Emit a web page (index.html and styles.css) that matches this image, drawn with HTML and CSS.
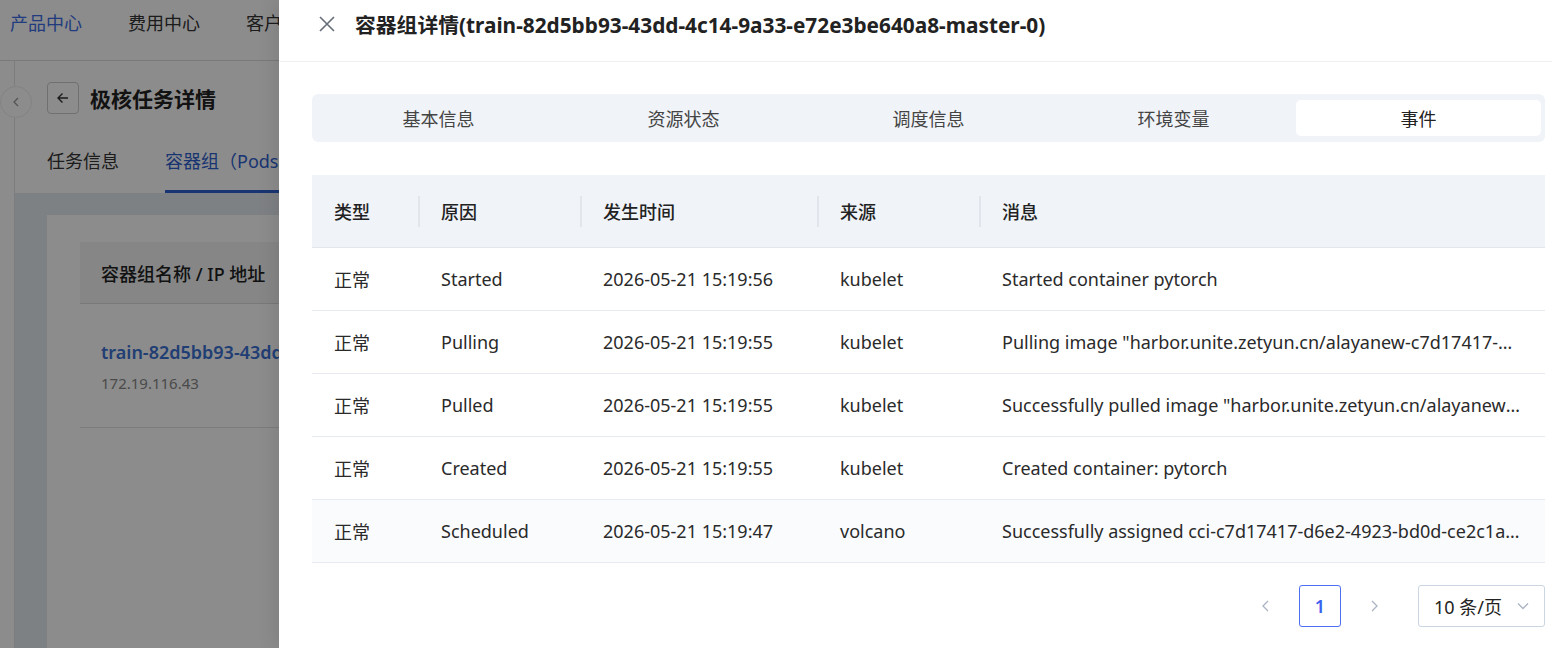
FILE: index.html
```html
<!DOCTYPE html>
<html lang="zh-CN">
<head>
  <meta charset="UTF-8">
  <meta name="viewport" content="width=device-width, initial-scale=1.0">
  <title>容器组详情</title>
  <link rel="stylesheet" href="styles.css">
</head>
<body>
  <!-- page behind the drawer -->
  <div class="page">
    <nav class="topnav">
      <a class="nav-item active">产品中心</a>
      <a class="nav-item">费用中心</a>
      <a class="nav-item">客户中心</a>
    </nav>
    <div class="main">
      <div class="side-strip"></div>
      <button class="collapse-btn">
        <svg width="12" height="12" viewBox="0 0 12 12"><path d="M8 2 L4 6 L8 10" fill="none" stroke="#999" stroke-width="1.3"/></svg>
      </button>
      <div class="content">
        <div class="page-head">
          <button class="back-btn">
            <svg width="16" height="16" viewBox="0 0 16 16"><path d="M13 8 H3 M7.5 3.5 L3 8 L7.5 12.5" fill="none" stroke="#333" stroke-width="1.4"/></svg>
          </button>
          <h1 class="page-title">极核任务详情</h1>
        </div>
        <div class="page-tabs">
          <span class="page-tab">任务信息</span>
          <span class="page-tab current">容器组（Pods）</span>
        </div>
        <div class="page-body">
          <div class="card">
            <div class="pod-table">
              <div class="pod-head">容器组名称 / IP 地址</div>
              <div class="pod-row">
                <a class="pod-name">train-82d5bb93-43dd-4c14-9a33-e72e3be640a8-master-0</a>
                <div class="pod-ip">172.19.116.43</div>
              </div>
            </div>
          </div>
        </div>
      </div>
    </div>
  </div>

  <div class="mask"></div>

  <aside class="drawer">
    <header class="drawer-head">
      <svg class="close-icon" width="18" height="18" viewBox="0 0 18 18"><path d="M2 2 L16 16 M16 2 L2 16" fill="none" stroke="#666e7a" stroke-width="1.6"/></svg>
      <h2 class="drawer-title">容器组详情(train-82d5bb93-43dd-4c14-9a33-e72e3be640a8-master-0)</h2>
    </header>

    <div class="drawer-body">
      <div class="seg-tabs">
        <div class="seg-tab">基本信息</div>
        <div class="seg-tab">资源状态</div>
        <div class="seg-tab">调度信息</div>
        <div class="seg-tab">环境变量</div>
        <div class="seg-tab active">事件</div>
      </div>

      <table class="events">
        <thead>
          <tr>
            <th class="c-type">类型</th>
            <th class="c-reason">原因</th>
            <th class="c-time">发生时间</th>
            <th class="c-from">来源</th>
            <th class="c-msg">消息</th>
          </tr>
        </thead>
        <tbody>
          <tr>
            <td>正常</td>
            <td>Started</td>
            <td>2026-05-21 15:19:56</td>
            <td>kubelet</td>
            <td><div class="ellipsis">Started container pytorch</div></td>
          </tr>
          <tr>
            <td>正常</td>
            <td>Pulling</td>
            <td>2026-05-21 15:19:55</td>
            <td>kubelet</td>
            <td><div class="ellipsis">Pulling image "harbor.unite.zetyun.cn/alayanew-c7d17417-d6e2-4923-bd0d-ce2c1a/pytorch:latest"</div></td>
          </tr>
          <tr>
            <td>正常</td>
            <td>Pulled</td>
            <td>2026-05-21 15:19:55</td>
            <td>kubelet</td>
            <td><div class="ellipsis">Successfully pulled image "harbor.unite.zetyun.cn/alayanew-c7d17417-d6e2-4923-bd0d-ce2c1a/pytorch:latest"</div></td>
          </tr>
          <tr>
            <td>正常</td>
            <td>Created</td>
            <td>2026-05-21 15:19:55</td>
            <td>kubelet</td>
            <td><div class="ellipsis">Created container: pytorch</div></td>
          </tr>
          <tr class="hover">
            <td>正常</td>
            <td>Scheduled</td>
            <td>2026-05-21 15:19:47</td>
            <td>volcano</td>
            <td><div class="ellipsis">Successfully assigned cci-c7d17417-d6e2-4923-bd0d-ce2c1a/train-82d5bb93-43dd-4c14-9a33-e72e3be640a8-master-0</div></td>
          </tr>
        </tbody>
      </table>

      <div class="pager">
        <span class="pager-arrow prev">
          <svg width="14" height="14" viewBox="0 0 14 14"><path d="M9 2 L4 7 L9 12" fill="none" stroke="#aab4c2" stroke-width="1.3"/></svg>
        </span>
        <span class="pager-num">1</span>
        <span class="pager-arrow next">
          <svg width="14" height="14" viewBox="0 0 14 14"><path d="M5 2 L10 7 L5 12" fill="none" stroke="#aab4c2" stroke-width="1.3"/></svg>
        </span>
        <div class="page-size">
          <span>10 条/页</span>
          <svg width="14" height="14" viewBox="0 0 14 14"><path d="M2 4.5 L7 9.5 L12 4.5" fill="none" stroke="#aab4c2" stroke-width="1.3"/></svg>
        </div>
      </div>
    </div>
  </aside>
</body>
</html>
```

FILE: styles.css
```css
* {
  box-sizing: border-box;
}

body {
  margin: 0;
  width: 1552px;
  height: 648px;
  overflow: hidden;
  font-family: "Noto Sans", "Noto Sans CJK SC", sans-serif;
  font-size: 18px;
  color: #222;
  background: #fff;
  position: relative;
}

button {
  font: inherit;
  background: #fff;
  padding: 0;
  cursor: pointer;
}

/* ---- page underneath ---- */

.page {
  height: 100%;
  display: flex;
  flex-direction: column;
}

.topnav {
  height: 61px;
  flex-shrink: 0;
  display: flex;
  align-items: center;
  gap: 46px;
  padding: 0 0 16px 10px;
  border-bottom: 1px solid #dcdcdc;
  white-space: nowrap;
}

.nav-item {
  font-size: 18px;
  color: #333;
}

.nav-item.active {
  color: #3b6ee8;
}

.main {
  flex: 1;
  display: flex;
  position: relative;
}

.side-strip {
  width: 15px;
  border-right: 1px solid #e4e4e4;
  flex-shrink: 0;
}

.collapse-btn {
  position: absolute;
  left: 0;
  top: 25px;
  width: 32px;
  height: 32px;
  border-radius: 50%;
  border: 1px solid #eee;
  display: flex;
  align-items: center;
  justify-content: center;
}

.content {
  flex: 1;
  display: flex;
  flex-direction: column;
  min-width: 0;
}

.page-head {
  display: flex;
  align-items: center;
  gap: 11px;
  padding: 21px 0 0 32px;
}

.back-btn {
  width: 32px;
  height: 32px;
  border: 1px solid #ccc;
  border-radius: 4px;
  display: flex;
  align-items: center;
  justify-content: center;
}

.page-title {
  margin: 0;
  font-size: 21px;
  font-weight: 700;
  color: #222;
}

.page-tabs {
  display: flex;
  gap: 46px;
  padding: 33px 0 0 32px;
  white-space: nowrap;
}

.page-tab {
  padding-bottom: 17px;
  color: #333;
  font-size: 18px;
}

.page-tab.current {
  color: #2f5fd0;
  border-bottom: 3px solid #2f5fd0;
}

.page-body {
  flex: 1;
  background: #e5ebf0;
  padding: 22px 0 0 32px;
}

.card {
  background: #fff;
  height: 100%;
  padding: 27px 0 0 33px;
}

.pod-head {
  height: 62px;
  display: flex;
  align-items: center;
  padding-left: 21px;
  background: #f4f5f6;
  border-bottom: 1px solid #ddd;
  font-weight: 500;
  white-space: nowrap;
}

.pod-row {
  height: 124px;
  padding: 36px 0 0 21px;
  border-bottom: 1px solid #e2e2e2;
  white-space: nowrap;
}

.pod-name {
  color: #3c72d4;
  font-weight: 600;
  font-size: 18px;
}

.pod-ip {
  margin-top: 9px;
  font-size: 15px;
  color: #888;
}

/* ---- overlay + drawer ---- */

.mask {
  position: absolute;
  inset: 0;
  background: rgba(0, 0, 0, 0.45);
}

.drawer {
  position: absolute;
  top: 0;
  right: 0;
  bottom: 0;
  width: 1273px;
  background: #fff;
  box-shadow: -6px 0 16px rgba(0, 0, 0, 0.08);
  display: flex;
  flex-direction: column;
}

.drawer-head {
  height: 62px;
  flex-shrink: 0;
  display: flex;
  align-items: center;
  gap: 19px;
  padding: 0 0 14px 39px;
  border-bottom: 1px solid #f0f0f0;
}

.close-icon {
  flex-shrink: 0;
}

.drawer-title {
  margin: 0;
  font-size: 20.8px;
  font-weight: 700;
  color: #222;
  white-space: nowrap;
}

.drawer-body {
  padding: 32px 7px 0 33px;
}

.seg-tabs {
  display: grid;
  grid-template-columns: repeat(5, 1fr);
  padding: 6px 4px;
  background: #f0f3f8;
  border-radius: 6px;
}

.seg-tab {
  height: 36px;
  display: flex;
  align-items: center;
  justify-content: center;
  color: #444;
  font-size: 18px;
  border-radius: 5px;
}

.seg-tab.active {
  background: #fff;
  color: #222;
}

.events {
  width: 100%;
  margin-top: 33px;
  border-collapse: collapse;
  table-layout: fixed;
}

.events th,
.events td {
  text-align: left;
  padding: 0 22px;
  white-space: nowrap;
}

.events th {
  height: 72px;
  background: #f0f3f8;
  border-bottom: 1px solid #e3e7ed;
  font-weight: 500;
  color: #222;
  position: relative;
}

/* short dividers between header cells */
.events th + th::before {
  content: "";
  position: absolute;
  left: -1px;
  top: 21px;
  height: 31px;
  border-left: 2px solid #e2e6ec;
}

.events td {
  height: 63.2px;
  border-bottom: 1px solid #e7eaf0;
  color: #2a2a2a;
}

.events tr.hover td {
  background: #f9fbfd;
}

.c-type { width: 107px; }
.c-reason { width: 162px; }
.c-time { width: 237px; }
.c-from { width: 162px; }

.ellipsis {
  overflow: hidden;
  text-overflow: ellipsis;
}

.pager {
  display: flex;
  justify-content: flex-end;
  align-items: center;
  margin-top: 22px;
}

.pager-arrow {
  width: 50px;
  height: 42px;
  display: flex;
  align-items: center;
  justify-content: center;
}

.pager-arrow.prev {
  margin-right: 8px;
}

.pager-arrow.next {
  margin-left: 8px;
}

.pager-num {
  width: 42px;
  height: 42px;
  border: 1px solid #4d6ff0;
  border-radius: 3px;
  color: #3d63ee;
  display: flex;
  align-items: center;
  justify-content: center;
  font-weight: 600;
}

.page-size {
  width: 127px;
  height: 42px;
  margin-left: 19px;
  border: 1px solid #cad6e2;
  border-radius: 3px;
  display: flex;
  align-items: center;
  justify-content: space-between;
  padding: 0 14px 0 15px;
  color: #222;
}
```
